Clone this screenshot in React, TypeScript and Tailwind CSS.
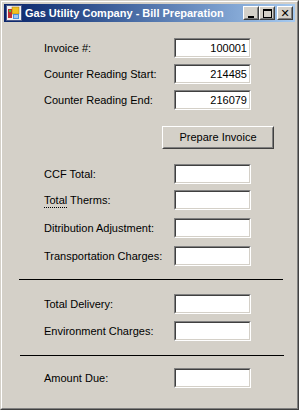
import type { ReactNode } from 'react';

const font = { fontFamily: '"Liberation Sans", Arial, sans-serif' };

function TextBox({ value }: { value?: string }) {
  return (
    <div className="w-[77px] h-[20px] shrink-0 border border-t-[#808080] border-l-[#808080] border-b-white border-r-white">
      <div className="h-full border border-t-[#404040] border-l-[#404040] border-b-[#d4d0c8] border-r-[#d4d0c8] bg-white flex items-center justify-end pr-[2px] text-[11px] text-black">
        {value}
      </div>
    </div>
  );
}

function Row({ label, value, className = '' }: { label: ReactNode; value?: string; className?: string }) {
  return (
    <div className={`flex items-center h-[20px] ${className}`}>
      <div className="w-[170px] shrink-0 pl-[40px] text-[11px] text-black leading-none pt-[1px] whitespace-nowrap">{label}</div>
      <TextBox value={value} />
    </div>
  );
}

function CaptionButton({ children }: { children: ReactNode }) {
  return (
    <div className="w-[16px] h-[14px] bg-[#d4d0c8] border border-t-white border-l-white border-b-[#404040] border-r-[#404040]">
      <div className="w-full h-full border border-t-[#d4d0c8] border-l-[#d4d0c8] border-b-[#808080] border-r-[#808080] relative">
        {children}
      </div>
    </div>
  );
}

function AppIcon() {
  return (
    <svg width="16" height="16" viewBox="0 0 16 16">
      <rect x="0.5" y="0.5" width="15" height="15" fill="#f0f0f0" stroke="#4a5a8a" />
      <rect x="2" y="4" width="4" height="9" fill="#c03030" />
      <rect x="3" y="5" width="2" height="2" fill="#40c040" />
      <rect x="6" y="2" width="7" height="7" fill="#f0c020" stroke="#a07010" strokeWidth="0.5" />
      <rect x="7" y="9" width="6" height="5" fill="#4a90e0" />
      <rect x="8" y="10" width="4" height="3" fill="#a0c8f0" />
    </svg>
  );
}

export default function App() {
  return (
    <div className="w-[299px] h-[410px] bg-[#d4d0c8] border border-t-[#d4d0c8] border-l-[#d4d0c8] border-b-[#404040] border-r-[#404040]" style={font}>
      <div className="w-full h-full border border-t-white border-l-white border-b-[#808080] border-r-[#808080] p-[2px] flex flex-col">
        {/* title bar */}
        <div className="h-[18px] flex items-center bg-gradient-to-r from-[#0a246a] to-[#a6caf0] pl-[2px] pr-[2px]">
          <AppIcon />
          <span className="ml-[3px] text-white font-bold text-[11px] leading-none whitespace-nowrap">
            Gas Utility Company - Bill Preparation
          </span>
          <div className="ml-auto flex items-center">
            <CaptionButton>
              <div className="absolute left-[3px] top-[8px] w-[6px] h-[2px] bg-black" />
            </CaptionButton>
            <CaptionButton>
              <div className="absolute left-[2px] top-[1px] w-[9px] h-[9px] border border-black border-t-2" />
            </CaptionButton>
            <div className="w-[2px]" />
            <CaptionButton>
              <div className="absolute inset-0 flex items-center justify-center text-black font-bold text-[11px] leading-none" style={{ fontFamily: '"DejaVu Sans", sans-serif' }}>
                ✕
              </div>
            </CaptionButton>
          </div>
        </div>

        {/* client area */}
        <div className="flex flex-col pt-[16px]">
          <Row label="Invoice #:" value="100001" />
          <Row label="Counter Reading Start:" value="214485" className="mt-[6px]" />
          <Row label="Counter Reading End:" value="216079" className="mt-[6px]" />

          <div className="mt-[16px] ml-[158px] w-[112px] h-[23px] border border-t-white border-l-white border-b-[#404040] border-r-[#404040]">
            <div className="w-full h-full border border-t-[#d4d0c8] border-l-[#d4d0c8] border-b-[#808080] border-r-[#808080] flex items-center justify-center text-[11px] text-black">
              Prepare Invoice
            </div>
          </div>

          <Row label="CCF Total:" className="mt-[15px]" />
          <Row
            label={
              <>
                <span className="border-b border-dotted border-black pb-[1px]">Total</span> Therms:
              </>
            }
            className="mt-[6px]"
          />
          <Row label="Ditribution Adjustment:" className="mt-[8px]" />
          <Row label="Transportation Charges:" className="mt-[8px]" />

          <div className="mt-[13px] ml-[15px] w-[264px] h-[1px] bg-black" />

          <Row label="Total Delivery:" className="mt-[14px]" />
          <Row label="Environment Charges:" className="mt-[7px]" />

          <div className="mt-[14px] ml-[16px] w-[264px] h-[1px] bg-black" />

          <Row label="Amount Due:" className="mt-[12px]" />
        </div>
      </div>
    </div>
  );
}
